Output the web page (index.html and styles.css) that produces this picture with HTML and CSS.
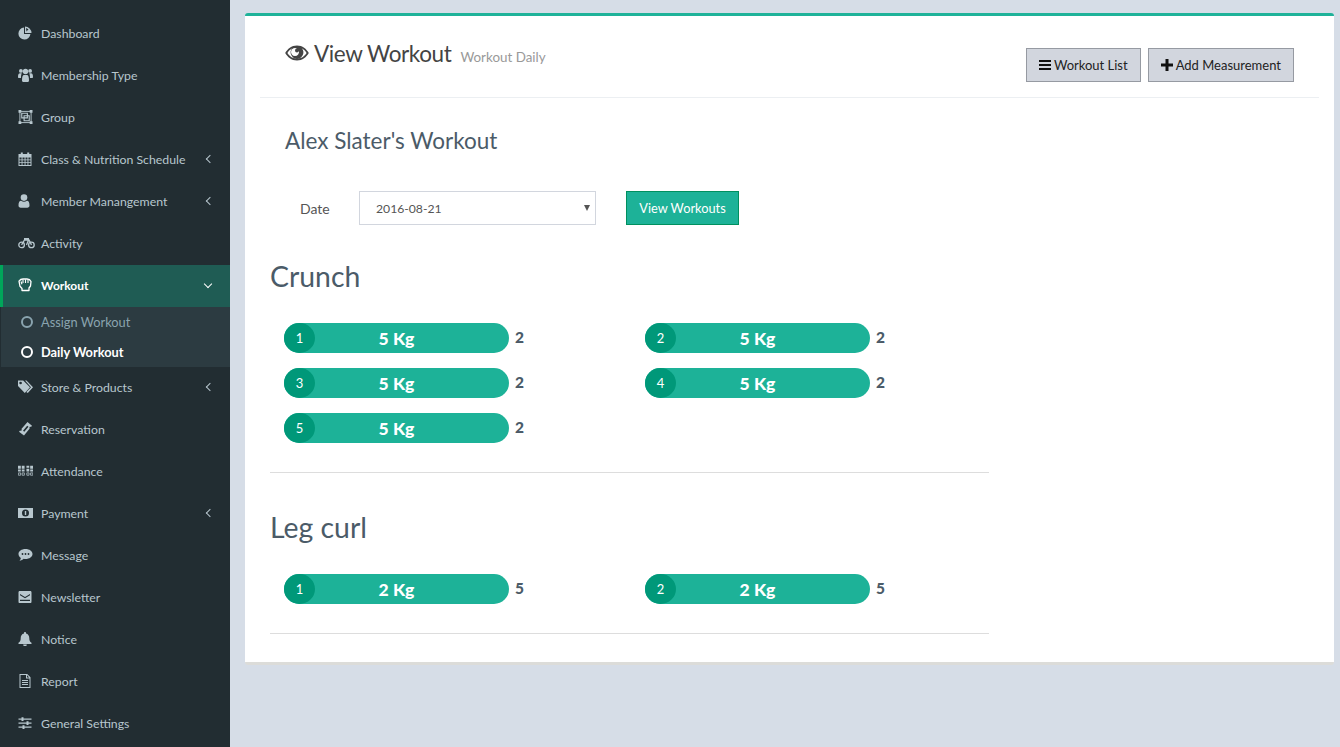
FILE: index.html
```html
<!DOCTYPE html>
<html lang="en">
<head>
<meta charset="utf-8">
<title>View Workout</title>
<link rel="stylesheet" href="styles.css">
</head>
<body>
<aside class="sidebar">
  <ul class="menu">
    <li class="item"><svg class="ico" viewBox="0 0 14 14"><path d="M6 1.600A6 6 0 1 0 12.400 8H6z"/><path d="M7 .5v6.500h6.500A6.500 6.500 0 0 0 7 .5zM8 2l2.500 1.200L8.500 5.500z" fill-rule="evenodd"/></svg><span>Dashboard</span></li>
    <li class="item"><svg class="ico wide" viewBox="0 0 15 14"><circle cx="2.900" cy="2.900" r="1.900"/><circle cx="12.100" cy="2.900" r="1.900"/><circle cx="7.500" cy="3.500" r="2.700"/><path d="M0 9c0-3 .8-3.800 2-3.800h1.800C3.200 6.300 3 8 3 10H1C.4 10 0 9.600 0 9zM15 9c0-3-.8-3.800-2-3.800h-1.800c.6 1.100.8 2.800.8 4.800h2c.6 0 1-.4 1-1zM4 12.500C4 8.500 4.800 7 6 7h3c1.200 0 2 1.500 2 5.500 0 .8-.5 1.500-1.500 1.500h-4C4.500 14 4 13.300 4 12.500z"/></svg><span>Membership Type</span></li>
    <li class="item"><svg class="ico wide" viewBox="0 0 15 15"><path fill="none" stroke-width="1" d="M1.500 1.500h12v12h-12z"/><path d="M0 0h3v3H0zM12 0h3v3h-3zM0 12h3v3H0zM12 12h3v3h-3z"/><path fill="none" stroke-width="1.200" d="M3.500 3.500h6v5h-6zM6 6.200h5.500v5.300H6z"/></svg><span>Group</span></li>
    <li class="item"><svg class="ico" viewBox="0 0 14 14"><path fill-rule="evenodd" d="M.5 2h2.300V.5h2V2h4.400V.5h2V2h2.300v12H.5zM1.500 5.500v1.900h2.100V5.500zm3 0v1.900h2.100V5.500zm3 0v1.900h2V5.500zm2.900 0v1.900h2.100V5.500zm-8.900 2.800v1.900h2.100V8.300zm3 0v1.900h2.100V8.300zm3 0v1.900h2V8.300zm2.900 0v1.900h2.100V8.300zm-8.900 2.800V13h2.100v-1.900zm3 0V13h2.100v-1.900zm3 0V13h2v-1.900zm2.900 0V13h2.100v-1.900z"/></svg><span>Class &amp; Nutrition Schedule</span><i class="chev"></i></li>
    <li class="item"><svg class="ico" viewBox="0 0 14 14"><circle cx="6" cy="3.600" r="3.300"/><path d="M.5 11.500c0-3 .8-4.800 2.600-4.800.9.700 1.900 1.100 2.900 1.100s2-.4 2.900-1.100c1.800 0 2.600 1.800 2.600 4.800 0 1.400-.9 2.200-2.200 2.200H2.700C1.400 13.700.5 12.900.5 11.500z"/></svg><span>Member Manangement</span><i class="chev"></i></li>
    <li class="item"><svg class="ico wider" viewBox="0 0 17 11"><path fill="none" stroke-width="1.300" d="M6.400 7.400a2.800 2.800 0 1 1-5.600 0 2.800 2.800 0 0 1 5.600 0zM16.200 7.400a2.800 2.800 0 1 1-5.600 0 2.800 2.800 0 0 1 5.600 0zM3.600 7.400 6.500 2.500h4.500l2.500 4.900M8.500 7.400l2-4.900"/><path d="M6 .5h5v2H6z"/></svg><span>Activity</span></li>
    <li class="item active"><svg class="ico" viewBox="0 0 14 14"><path fill="none" stroke-width="1.300" stroke-linejoin="round" d="M1 3.200C2 1.800 3.500 1 5 1h4c2 .1 3.300 1 4 2.500l-.5 4.500-1.500 2v2.500H4v-2L2 8.300z"/><path fill="none" stroke-width="1.100" d="M5 1.500V5M7.500 1.500V5M10 1.800V5M3 3.500 4 6.200"/></svg><span>Workout</span><i class="chev down"></i></li>
    <li class="sub">
      <div class="sub-item"><i class="ring"></i><span>Assign Workout</span></div>
      <div class="sub-item on"><i class="ring"></i><span>Daily Workout</span></div>
    </li>
    <li class="item"><svg class="ico wide" viewBox="0 0 15 14"><path fill-rule="evenodd" d="M0 .5h5.200l6.800 6.800-5.200 5.600L0 6zM2.600 4.300a1.300 1.300 0 1 0 0-2.600 1.300 1.300 0 0 0 0 2.600z"/><path d="M7 .5h1.500l6.500 6.800-5.200 5.600-1.500-.9 4.700-4.700z"/></svg><span>Store &amp; Products</span><i class="chev"></i></li>
    <li class="item"><svg class="ico wide" viewBox="0 0 15 14"><path fill-rule="evenodd" d="M9.500 0 14 3.800 13 5c-.6-.3-1.100-.2-1.400.2-.4.400-.3 1 .1 1.400L6 13.500 1 9.700l1-1.200c.6.400 1.100.3 1.500-.1.400-.4.300-1-.1-1.400zM9.200 3.700 5 8.800l1.300 1 4.200-5z"/></svg><span>Reservation</span></li>
    <li class="item"><svg class="ico wide" viewBox="0 0 16 11"><path d="M0 0h3v3H0zM4 0h3v3H4zM0 4h3v2H0zM4 4h3v2H4zM9 0h3v2H9zM13 0h3v3h-3zM9 3h3v3H9zM13 4h3v2h-3z"/><path fill="none" stroke-width=".8" d="M.4 7.500h2.400V10H.4zM4.400 7.500h2.400V10H4.400zM9.400 7.500h2.400V10H9.400zM13.400 7.500h2.400V10h-2.400z"/></svg><span>Attendance</span></li>
    <li class="item"><svg class="ico wide" viewBox="0 0 15 11"><path fill-rule="evenodd" d="M0 .5h15v10H0zM7.500 2A3.500 3.500 0 1 0 7.500 9 3.500 3.500 0 0 0 7.500 2z"/><path d="M6.800 3.500h1.400v4H6.800z"/></svg><span>Payment</span><i class="chev"></i></li>
    <li class="item"><svg class="ico wide" viewBox="0 0 15 14"><path d="M7.500 1c4 0 7 2.200 7 5s-3 5-7 5c-.6 0-1.200-.1-1.800-.2C4.700 11.800 3.200 12.500 1.500 12.800c.7-.8 1.200-1.800 1.400-2.800C1.500 9.100.5 7.700.5 6c0-2.800 3-5 7-5z"/><circle cx="4.500" cy="6" r=".9" class="dot"/><circle cx="7.500" cy="6" r=".9" class="dot"/><circle cx="10.500" cy="6" r=".9" class="dot"/></svg><span>Message</span></li>
    <li class="item"><svg class="ico" viewBox="0 0 14 14"><path fill-rule="evenodd" d="M1.800 1h10.400C13.200 1 13.500 1.500 13.500 2.500v9c0 1-.3 1.500-1.300 1.500H1.800C.8 13 .5 12.500.5 11.500v-9C.5 1.500.8 1 1.800 1zM2 4v1.300l5 3 5-3V4L7 7zM2 9.800h10V11H2z"/></svg><span>Newsletter</span></li>
    <li class="item"><svg class="ico" viewBox="0 0 14 14"><path d="M7 0c.6 0 1 .4 1 1v.6c2.200.5 3.300 2.300 3.300 4.600 0 2.300.6 3.400 2.200 4.600v1.200H.5v-1.200C2.100 9.600 2.700 8.500 2.700 6.200 2.700 3.900 3.800 2.100 6 1.600V1c0-.6.400-1 1-1zM5.200 12.500h3.600a1.800 1.800 0 0 1-3.600 0z"/></svg><span>Notice</span></li>
    <li class="item"><svg class="ico" viewBox="0 0 14 14"><path fill-rule="evenodd" d="M1.500 0h7.700L12.500 3.300V14H1.500zM2.500 1v12h9V4.500H8V1zM9 1.300v2.200h2.200z"/><path d="M4 6h6v1H4zM4 8h6v1H4zM4 10h6v1H4z"/></svg><span>Report</span></li>
    <li class="item"><svg class="ico" viewBox="0 0 14 14"><path d="M.5 2.500h13v1.200H.5zM.5 6.500h13v1.200H.5zM.5 10.500h13v1.200H.5z"/><path d="M3.500 1.300h2v3.600h-2zM8.500 5.300h2v3.600h-2zM4.500 9.300h2v3.600h-2z"/></svg><span>General Settings</span></li>
  </ul>
</aside>

<main class="content">
  <section class="card">
    <header class="card-head">
      <h1 class="title"><svg class="eye" viewBox="0 0 24 16"><path fill-rule="evenodd" d="M12 .5C6.500.5 2.500 4 .2 8c2.300 4 6.300 7.500 11.800 7.500S21.500 12 23.800 8C21.500 4 17.500.5 12 .5zM2.400 8C3.600 6.100 5.200 4.400 7.300 3.300A6.200 6.200 0 0 0 12 13.700a6.200 6.200 0 0 0 4.700-10.400C18.800 4.400 20.400 6.100 21.600 8c-2.100 3.300-5.500 5.800-9.600 5.800S4.500 11.300 2.400 8z"/><path d="M12 3.500a2 2 0 0 0-2 2 2 2 0 0 0 2 2 2 2 0 0 0 1.900-1.500A4 4 0 1 1 12 3.500z" fill="#fff"/></svg>View Workout<small>Workout Daily</small></h1>
      <div class="actions">
        <button class="btn"><svg class="bi" viewBox="0 0 12 12"><path d="M0 1h12v2H0zM0 5h12v2H0zM0 9h12v2H0z"/></svg>Workout List</button>
        <button class="btn"><svg class="bi" viewBox="0 0 12 12"><path d="M4.500 0h3v4.500H12v3H7.500V12h-3V7.500H0v-3h4.500z"/></svg>Add Measurement</button>
      </div>
    </header>
    <h2 class="owner">Alex Slater's Workout</h2>
    <form class="filter">
      <label class="lbl" for="d">Date</label>
      <div class="sel-wrap"><select class="sel" id="d"><option>2016-08-21</option></select></div>
      <button type="button" class="go">View Workouts</button>
    </form>
    <div class="workouts">
      <article class="ex">
        <h3 class="ex-name">Crunch</h3>
        <div class="sets">
          <div class="set"><div class="pill"><b class="num">1</b><span>5 Kg</span></div><strong class="reps">2</strong></div>
          <div class="set"><div class="pill"><b class="num">2</b><span>5 Kg</span></div><strong class="reps">2</strong></div>
          <div class="set"><div class="pill"><b class="num">3</b><span>5 Kg</span></div><strong class="reps">2</strong></div>
          <div class="set"><div class="pill"><b class="num">4</b><span>5 Kg</span></div><strong class="reps">2</strong></div>
          <div class="set"><div class="pill"><b class="num">5</b><span>5 Kg</span></div><strong class="reps">2</strong></div>
        </div>
      </article>
      <article class="ex">
        <h3 class="ex-name">Leg curl</h3>
        <div class="sets">
          <div class="set"><div class="pill"><b class="num">1</b><span>2 Kg</span></div><strong class="reps">5</strong></div>
          <div class="set"><div class="pill"><b class="num">2</b><span>2 Kg</span></div><strong class="reps">5</strong></div>
        </div>
      </article>
    </div>
  </section>
</main>
</body>
</html>
```
FILE: styles.css
```css
* { box-sizing: border-box; }
html, body { height: 100%; }
body {
  margin: 0;
  display: flex;
  background: #d6dde7;
  font-family: "Lato", "Liberation Sans", sans-serif;
  font-size: 13px;
  overflow: hidden;
}
.sidebar { width: 230px; height: 747px; flex: none; background: #222d32; padding-top: 13px; overflow: hidden; }
.menu { list-style: none; margin: 0; padding: 0; }
.item {
  height: 42px;
  display: flex;
  align-items: center;
  padding: 0 0 2px 18px;
  color: #b8c7ce;
  font-size: 12.3px;
}
.item span { flex: 1; }
.ico { width: 14px; height: 14px; margin-right: 9px; flex: none; fill: #b8c7ce; stroke: #b8c7ce; stroke-width: 0; }
.ico.wide { width: 15px; margin-right: 8px; }
.ico.wider { width: 17px; margin-right: 6px; }
.dot { fill: #222d32; }
.chev {
  width: 6px; height: 6px; margin-right: 17px;
  border-left: 1.5px solid #b8c7ce;
  border-bottom: 1.5px solid #b8c7ce;
  transform: rotate(45deg);
}
.chev.down { transform: rotate(-45deg); margin-top: -3px; border-color: #fff; margin-right: 19px; }
.active { background: #1f5c54; color: #fff; border-left: 3px solid #00a65a; padding-left: 15px; font-size: 12px; font-weight: 700; }
.active .ico { fill: #fff; stroke: #fff; }
.sub { height: 60px; margin-left: 1px; background: #2c3b41; }
.sub-item { height: 30px; display: flex; align-items: center; padding-left: 20px; color: #8aa4af; font-size: 12.8px; }
.sub-item.on { color: #fff; font-weight: 700; }
.ring { width: 12px; height: 12px; border: 2px solid currentColor; border-radius: 50%; margin-right: 8px; flex: none; }
.content { flex: 1; padding: 13px 6px 0 15px; }
.card {
  height: 652px;
  background: #fff;
  border-top: 3px solid #1fb299;
  border-bottom: 3px solid #dcdcd9;
  border-radius: 3px;
  padding: 0 15px;
}
.card-head {
  height: 82px;
  display: flex;
  justify-content: space-between;
  border-bottom: 1px solid #eceff2;
  padding: 0 25px;
}
.title { margin: 19px 0 0; height: 36px; display: flex; align-items: center; font-size: 22.5px; letter-spacing: -.4px; font-weight: 400; color: #444; }
.title small { font-size: 13.4px; letter-spacing: 0; color: #999; margin-left: 9px; margin-top: 8px; }
.eye { width: 24px; height: 16px; fill: #444; margin-right: 5px; }
.actions { display: flex; gap: 7px; margin: 32px 0 0; }
.btn {
  height: 34px;
  display: flex;
  align-items: center;
  padding: 0 12px;
  background: #d2d6de;
  border: 1px solid #969aa2;
  color: #222;
  font: 13px "Lato", "Liberation Sans", sans-serif;
}
.bi { width: 12px; height: 12px; margin-right: 3px; fill: #111; }
.owner { margin: 27px 0 0 25px; font-size: 22.5px; font-weight: 400; color: #4b5b68; line-height: 32px; }
.filter { display: flex; align-items: center; margin: 34px 0 0 40px; }
.lbl { width: 59px; color: #555; font-size: 14px; }
.sel-wrap { position: relative; width: 237px; height: 34px; }
.sel-wrap::after {
  content: "";
  position: absolute;
  right: 6px; top: 14px;
  border-left: 3.5px solid transparent;
  border-right: 3.5px solid transparent;
  border-top: 6px solid #555;
  pointer-events: none;
}
.sel {
  width: 100%; height: 34px;
  appearance: none;
  background: #fff;
  border: 1px solid #d2d6de;
  border-radius: 0;
  padding: 0 16px;
  color: #555;
  font: 12.2px "Lato", "Liberation Sans", sans-serif;
}
.go {
  margin-left: 30px; height: 34px; width: 113px;
  background: #1db298;
  border: 1px solid #00905f;
  color: #fff;
  font: 12.8px "Lato", "Liberation Sans", sans-serif;
}
.workouts { margin: 31px 0 0 10px; width: 719px; }
.ex { border-bottom: 1px solid #ddd; padding-bottom: 29px; margin-bottom: 34px; }
.ex-name { margin: 0; font-size: 28.4px; font-weight: 400; color: #4b5b68; line-height: 40px; }
.sets { display: grid; grid-template-columns: 361px 1fr; row-gap: 15px; margin: 27px 0 0 14px; }
.set { display: flex; align-items: center; }
.pill {
  width: 225px; height: 30px;
  display: flex; align-items: center;
  background: #1db298;
  border-radius: 15px;
  color: #fff;
  font-size: 17.5px; font-weight: 900;
}
.pill span { flex: 1; text-align: center; padding-right: 31px; }
.num {
  width: 31px; height: 30px;
  background: #009879;
  border-radius: 50%;
  font-size: 13px; font-weight: 400;
  display: flex; align-items: center; justify-content: center;
}
.reps { margin-left: 6px; color: #4b5b68; font-size: 15.5px; font-weight: 900; margin-top: -2px; }
```
